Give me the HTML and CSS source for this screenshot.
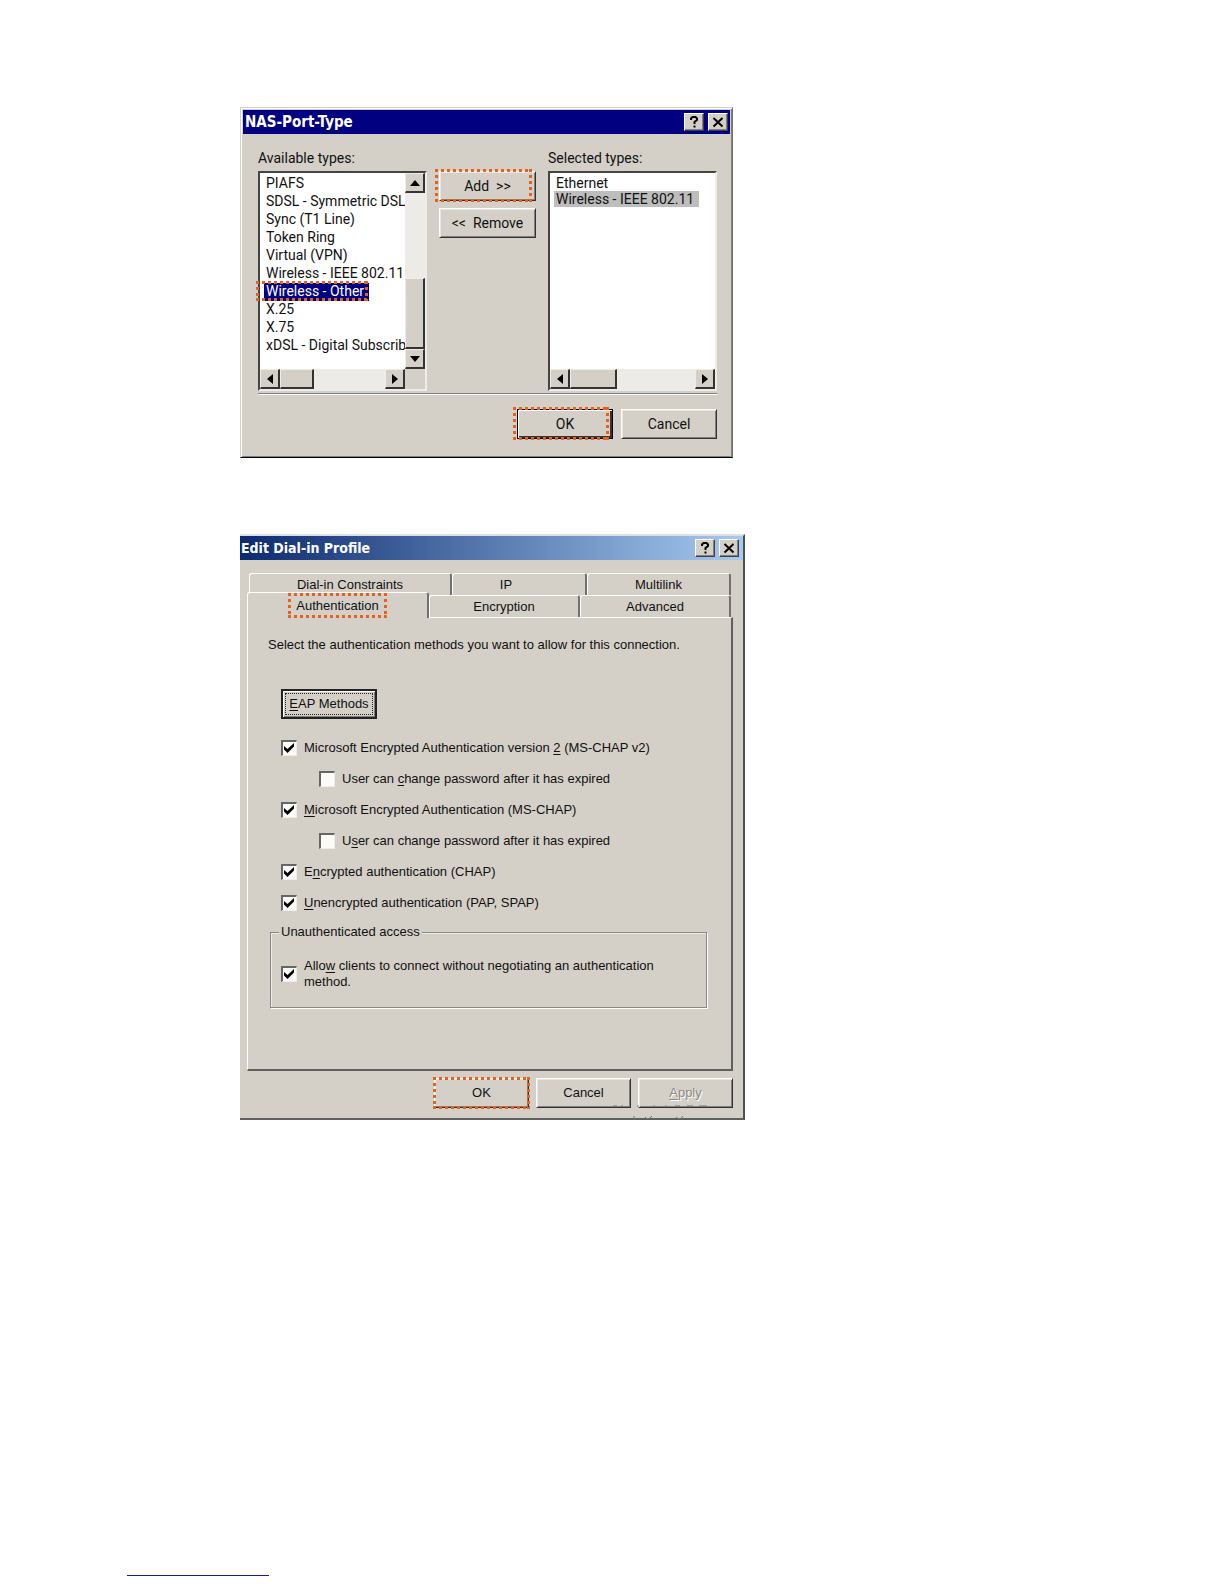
FILE: index.html
```html
<!DOCTYPE html>
<html lang="en">
<head>
  <meta charset="UTF-8" />
  <title>Remote access policy</title>
  <link rel="stylesheet" href="styles.css">
</head>
<body>

  <main>
    <!-- NAS-Port-Type -->
    <section class="dialog port-dialog">
      <header class="titlebar">
        <h2>NAS-Port-Type</h2>
        <button class="title-btn" aria-label="Help"><svg width="12" height="14" viewBox="0 0 12 14"><path d="M3 5V3.500L4.500 2H7.500L9 3.500V5L6.500 7V9M6.500 10.500V12.500" fill="none" stroke="#000" stroke-width="2"/></svg></button>
        <button class="title-btn" aria-label="Close"><svg width="12" height="12" viewBox="0 0 12 12"><path d="M1.500 2L10.500 10.500M10.500 2L1.500 10.500" stroke="#000" stroke-width="2"/></svg></button>
      </header>

      <div class="port-body">
        <div class="columns">
          <div>
            <label class="list-label" for="available">Available types:</label>
            <div class="listbox scroll-y">
              <select id="available" size="10">
                <option>PIAFS</option>
                <option>SDSL - Symmetric DSL</option>
                <option>Sync (T1 Line)</option>
                <option>Token Ring</option>
                <option>Virtual (VPN)</option>
                <option>Wireless - IEEE 802.11</option>
                <option selected>Wireless - Other</option>
                <option>X.25</option>
                <option>X.75</option>
                <option>xDSL - Digital Subscriber Line</option>
              </select>
              <div class="vscroll">
                <button class="arrow" aria-label="Scroll up"><svg width="10" height="6" viewBox="0 0 10 6"><path d="M0 6L5 0L10 6Z"/></svg></button>
                <span class="thumb"></span>
                <button class="arrow" aria-label="Scroll down"><svg width="10" height="6" viewBox="0 0 10 6"><path d="M0 0H10L5 6Z"/></svg></button>
              </div>
              <div class="hscroll">
                <button class="arrow" aria-label="Scroll left"><svg width="6" height="10" viewBox="0 0 6 10"><path d="M6 0V10L0 5Z"/></svg></button>
                <span class="thumb"></span>
                <button class="arrow" aria-label="Scroll right"><svg width="6" height="10" viewBox="0 0 6 10"><path d="M0 0L6 5L0 10Z"/></svg></button>
              </div>
              <span class="marker option-marker"></span>
            </div>
          </div>

          <div class="move-buttons">
            <button class="btn">Add &nbsp;&gt;&gt;<span class="marker"></span></button>
            <button class="btn">&lt;&lt; &nbsp;Remove</button>
          </div>

          <div>
            <label class="list-label" for="selected">Selected types:</label>
            <div class="listbox">
              <select id="selected" class="compact" size="10">
                <option>Ethernet</option>
                <option selected>Wireless - IEEE 802.11</option>
              </select>
              <div class="hscroll wide">
                <button class="arrow" aria-label="Scroll left"><svg width="6" height="10" viewBox="0 0 6 10"><path d="M6 0V10L0 5Z"/></svg></button>
                <span class="thumb"></span>
                <button class="arrow" aria-label="Scroll right"><svg width="6" height="10" viewBox="0 0 6 10"><path d="M0 0L6 5L0 10Z"/></svg></button>
              </div>
            </div>
          </div>
        </div>

        <div class="actions">
          <button class="btn default">OK<span class="marker"></span></button>
          <button class="btn">Cancel</button>
        </div>
      </div>
    </section>

    <!-- Edit Dial-in Profile -->
    <section class="dialog profile-dialog">
      <header class="titlebar">
        <h2>Edit Dial-in Profile</h2>
        <button class="title-btn" aria-label="Help"><svg width="12" height="14" viewBox="0 0 12 14"><path d="M3 5V3.500L4.500 2H7.500L9 3.500V5L6.500 7V9M6.500 10.500V12.500" fill="none" stroke="#000" stroke-width="2"/></svg></button>
        <button class="title-btn" aria-label="Close"><svg width="12" height="12" viewBox="0 0 12 12"><path d="M1.500 2L10.500 10.500M10.500 2L1.500 10.500" stroke="#000" stroke-width="2"/></svg></button>
      </header>

      <div class="profile-body">
        <nav class="tabs">
          <div class="tab-row back-row">
            <button class="tab">Dial-in Constraints</button>
            <button class="tab tab-ip">IP</button>
            <button class="tab">Multilink</button>
          </div>
          <div class="tab-row front-row">
            <button class="tab active"><span class="tab-text">Authentication<span class="marker"></span></span></button>
            <button class="tab">Encryption</button>
            <button class="tab">Advanced</button>
          </div>
        </nav>

        <div class="panel">
          <p>Select the authentication methods you want to allow for this connection.</p>
          <button class="btn eap"><span><u>E</u>AP Methods</span></button>

          <div class="checks">
            <label class="check"><input type="checkbox" checked><span>Microsoft Encrypted Authentication version <u>2</u> (MS-CHAP v2)</span></label>
            <label class="check sub"><input type="checkbox"><span>User can <u>c</u>hange password after it has expired</span></label>
            <label class="check"><input type="checkbox" checked><span><u>M</u>icrosoft Encrypted Authentication (MS-CHAP)</span></label>
            <label class="check sub"><input type="checkbox"><span>U<u>s</u>er can change password after it has expired</span></label>
            <label class="check"><input type="checkbox" checked><span>E<u>n</u>crypted authentication (CHAP)</span></label>
            <label class="check"><input type="checkbox" checked><span><u>U</u>nencrypted authentication (PAP, SPAP)</span></label>
          </div>

          <fieldset>
            <legend>Unauthenticated access</legend>
            <label class="check"><input type="checkbox" checked><span>Allo<u>w</u> clients to connect without negotiating an authentication method.</span></label>
          </fieldset>
        </div>

        <div class="actions">
          <button class="btn">OK<span class="marker"></span></button>
          <button class="btn">Cancel</button>
          <button class="btn" disabled><u>A</u>pply</button>
        </div>
      </div>
      <svg class="smudge" width="100" height="15" viewBox="0 0 100 15"><path d="M0 1H4M8 1H10M24 1H26M40 1H42M52 1H54M62 1H67M74 1H80M86 1H94M21 11V15M32 12Q35 16 39 11M63 12Q67 16 70 11" fill="none" stroke="#777"/></svg>
    </section>
  </main>

  <footer>
    <hr>
  </footer>

</body>
</html>
```

FILE: styles.css
```css
* {
  box-sizing: border-box;
}
body {
  margin: 0;
  min-height: 100vh;
  display: flex;
  flex-direction: column;
  background: #fff;
  color: #111;
  font: 14px/16px Roboto, "Liberation Sans", sans-serif;
}
main {
  padding: 107px 40px 40px 240px;
}
button, select, input {
  font: inherit;
  color: inherit;
  margin: 0;
}
p {
  margin: 0;
}
u {
  text-underline-offset: 2px;
}

/* Windows */
.dialog {
  position: relative;
  background: #d4d0c8;
}
.port-dialog {
  max-width: 493px;
  padding: 2px;
  border: 1px solid #d4d0c8;
  border-right-color: #707070;
  border-bottom-color: #000;
  box-shadow: inset 1px 1px #fff, inset -1px -1px #808080;
}
.profile-dialog {
  max-width: 505px;
  margin-top: 76px;
  border-top: 2px solid #dfdfe2;
  border-right: 2px solid #505050;
  border-bottom: 2px solid #606060;
  font: 13px/16px "Liberation Sans", Arial, sans-serif;
}
.titlebar {
  display: flex;
  align-items: center;
  gap: 4px;
  height: 24px;
  padding: 0 2px;
  background: #000080;
  color: #fff;
}
.profile-dialog .titlebar {
  padding: 0 4px 0 1px;
  background: linear-gradient(90deg, #0c2a70, #a6caf0);
}
.titlebar h2 {
  flex: 1;
  margin: 0;
  font: bold 15px/20px "DejaVu Sans Condensed", "DejaVu Sans", sans-serif;
}
.profile-dialog h2 {
  font-size: 14px;
}
.title-btn {
  display: flex;
  align-items: center;
  justify-content: center;
  width: 20px;
  height: 18px;
  padding: 0;
  background: #d4d0c8;
  border: 1px solid #fff;
  border-right-color: #404040;
  border-bottom-color: #404040;
  box-shadow: inset -1px -1px #808080;
}

/* Buttons */
.btn {
  position: relative;
  width: 96px;
  height: 30px;
  padding: 0;
  background: #d4d0c8;
  border: 1px solid #fff;
  border-right-color: #333;
  border-bottom-color: #333;
  box-shadow: inset 1px 1px #e8e6e0, inset -1px -1px #808080;
}
.btn.default {
  border-color: #000;
  box-shadow: inset 1px 1px #fff, inset -2px -2px #333;
}
.btn:disabled {
  color: #8c8a84;
  text-shadow: 1px 1px #fff;
}
.actions {
  display: flex;
  justify-content: flex-end;
  gap: 8px;
}

/* Dotted highlight */
.marker {
  --dots: #e8601c 0 3px, transparent 3px 6px;
  position: absolute;
  inset: -3px 3px -2px -5px;
  pointer-events: none;
  background:
    repeating-linear-gradient(90deg, var(--dots)) top / 100% 3px no-repeat,
    repeating-linear-gradient(90deg, var(--dots)) bottom / 100% 3px no-repeat,
    repeating-linear-gradient(var(--dots)) left / 3px 100% no-repeat,
    repeating-linear-gradient(var(--dots)) right / 3px 100% no-repeat;
}

/* NAS-Port-Type */
.port-body {
  padding: 16px 13px 16px 15px;
}
.columns {
  display: grid;
  grid-template-columns: 1fr 97px 1fr;
  gap: 12px;
  padding-bottom: 2px;
  border-bottom: 1px solid #808080;
  box-shadow: 0 1px #fff;
}
.list-label {
  display: block;
  margin-bottom: 5px;
}
.listbox {
  position: relative;
  display: grid;
  grid-template-columns: minmax(0, 1fr);
  grid-template-rows: 196px 20px;
  border: 2px solid #444;
  border-right-color: #eeece8;
  border-bottom-color: #eeece8;
  background: #d4d0c8;
}
.listbox.scroll-y {
  grid-template-columns: minmax(0, 1fr) 20px;
}
.listbox select {
  width: 100%;
  height: 100%;
  padding: 2px 0 0 4px;
  border: 0;
  border-radius: 0;
  outline: 0;
  background: #fff;
  overflow: hidden;
}
.listbox option {
  width: max-content;
  min-height: 18px;
  padding: 0 5px 0 2px;
  line-height: 18px;
}
.listbox option:checked {
  background: linear-gradient(#000080, #000080);
  color: #fff;
}
.listbox .compact option {
  min-height: 16px;
  line-height: 16px;
}
.listbox .compact option:checked {
  background: linear-gradient(#bdbdbd, #bdbdbd);
  color: #111;
}
.vscroll, .hscroll {
  display: flex;
  background: #ecebe8;
}
.vscroll {
  flex-direction: column;
}
.arrow, .thumb {
  background: #d4d0c8;
  border: 1px solid #eeece8;
  border-right: 2px solid #333;
  border-bottom: 2px solid #333;
}
.arrow {
  display: flex;
  flex: none;
  align-items: center;
  justify-content: center;
  width: 20px;
  height: 20px;
  padding: 0;
}
.vscroll .thumb {
  height: 71px;
  margin-top: auto;
}
.hscroll .thumb {
  width: 34px;
  margin-right: auto;
}
.hscroll.wide .thumb {
  width: 47px;
}
.option-marker {
  inset: 108px 57px 88px -4px;
}
.move-buttons {
  display: flex;
  flex-direction: column;
  gap: 7px;
  padding-top: 21px;
}
.move-buttons .btn {
  width: 100%;
}
.port-body .actions {
  margin-top: 15px;
}

/* Edit Dial-in Profile */
.profile-body {
  padding: 13px 10px 10px 7px;
}
.tab-row {
  display: grid;
  grid-template-rows: 22px;
}
.back-row {
  grid-template-columns: 203fr 135fr 144fr;
  margin: 0 2px;
}
.front-row {
  grid-template-columns: 182fr 151fr 151fr;
  align-items: end;
  margin-right: 2px;
}
.tab {
  height: 22px;
  padding: 0;
  background: #d4d0c8;
  border: 1px solid #fff;
  border-right: 2px solid #707070;
  border-bottom: 0;
  border-radius: 3px 3px 0 0;
}
.tab-ip {
  padding-right: 26px;
}
.tab.active {
  position: relative;
  height: 26px;
  margin-bottom: -1px;
}
.tab-text {
  position: relative;
}
.panel {
  padding: 19px 24px 61px 20px;
  border: 1px solid #fff;
  border-right: 2px solid #606060;
  border-bottom: 2px solid #606060;
}
.btn.eap {
  display: block;
  margin: 36px 0 21px 13px;
  border: 2px solid #222;
  box-shadow: inset 1px 1px #fff, inset -1px -1px #808080;
}
.eap span {
  display: block;
  margin: 0 3px;
  padding: 2px 0;
  outline: 1px dotted #222;
}
.checks {
  display: flex;
  flex-direction: column;
  gap: 15px;
  padding-left: 13px;
}
.check {
  display: flex;
  align-items: center;
  gap: 7px;
}
.check.sub {
  padding-left: 38px;
}
.check input {
  appearance: none;
  flex: none;
  width: 16px;
  height: 16px;
  background: #fcfbf8;
  border: 2px solid #666;
  border-right: 1px solid #eeece8;
  border-bottom: 1px solid #eeece8;
}
.check input:checked::before {
  content: "";
  display: block;
  width: 10px;
  height: 10px;
  margin: 1px;
  background: #000;
  clip-path: polygon(0 30%, 35% 60%, 100% 0, 100% 35%, 35% 100%, 0 65%);
}
fieldset {
  margin: 13px 0 0 2px;
  padding: 18px 30px 17px 10px;
  border: 1px solid #888;
  box-shadow: 1px 1px #fff, inset 1px 1px #eeece8;
}
legend {
  margin-left: -2px;
  padding: 0 2px;
  background: #d4d0c8;
}
.profile-body .actions {
  gap: 7px;
  margin-top: 7px;
}
.profile-body .actions .btn {
  width: 95px;
}
.profile-body .marker {
  inset: -2px;
}
.profile-body .tab-text .marker {
  inset: -5px -8px;
}
.smudge {
  position: absolute;
  right: 30px;
  bottom: -2px;
}

footer {
  margin-top: auto;
  padding: 0 127px 8px;
}
hr {
  width: 142px;
  margin: 0;
  border: 0;
  border-top: 1px solid #1a1a8c;
}
```
